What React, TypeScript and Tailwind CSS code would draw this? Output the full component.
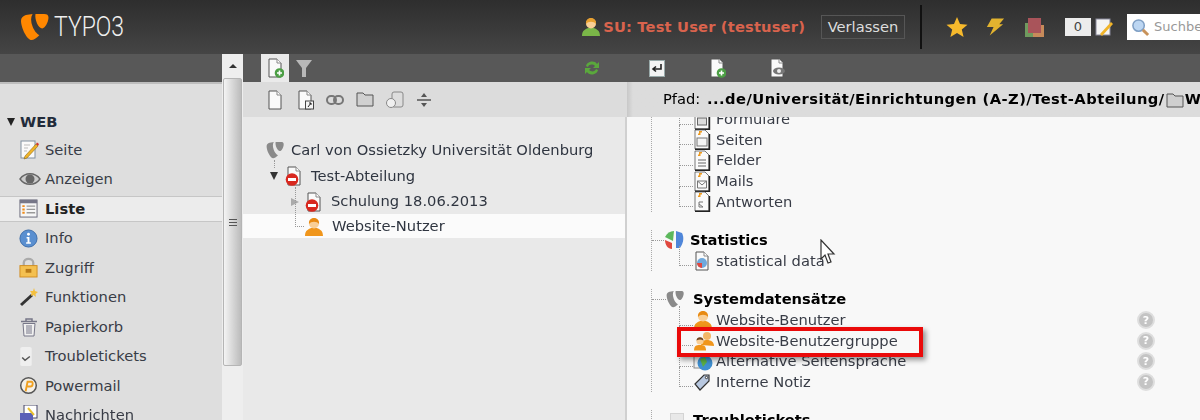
import type { ReactNode } from "react";

const Typo3Mark = ({ color, className }: { color: string; className: string }) => (
  <svg viewBox="0 0 30 28" className={className}>
    <path d="M1 7 C1 4 3 2 6 1 L13 0 C11 3 11 8 13 13 C15 18 17 20 20 22 C17 25 14 27 12 27 C7 27 1 14 1 7 Z" fill={color} />
    <path d="M16 0 L25 0 C28 0 29.5 1 29.5 4 C29.5 8 26 15 23 15 C19 15 15 6 16 0 Z" fill={color} />
  </svg>
);

const Page = ({ children, fold = "#fff" }: { children?: ReactNode; fold?: string }) => (
  <svg viewBox="0 0 18 20" className="h-5 w-[18px]">
    <path d="M3 1 H11 L15 5 V19 H3 Z" fill="#fafafa" stroke="#555" strokeWidth="1" />
    <path d="M11 1 V5 H15" fill={fold} stroke="#888" strokeWidth="1" />
    {children}
  </svg>
);

const NewBadge = () => (
  <g>
    <circle cx="13.5" cy="15" r="4.8" fill="#4c9f45" />
    <path d="M13.5 12.5 V17.5 M11 15 H16" stroke="#fff" strokeWidth="1.6" />
  </g>
);

const StopBadge = () => (
  <g>
    <circle cx="7" cy="13.5" r="6.3" fill="#d8281f" />
    <rect x="3" y="12" width="8" height="3" fill="#fff" />
  </g>
);

const UserIcon = ({ body = "#f0961c", hair = "#e88a12" }: { body?: string; hair?: string }) => (
  <svg viewBox="0 0 20 20" className="h-5 w-5">
    <path d="M1 19 C1 13 5 12 7 11 H13 C15 12 19 13 19 19 Z" fill={body} />
    <circle cx="10" cy="6.5" r="5" fill="#f9cf96" />
    <path d="M5 7 C4 -1 16 -1 15 7 C13 4 7 4 5 7 Z" fill={hair} />
  </svg>
);

const GroupIcon = () => (
  <svg viewBox="0 0 22 20" className="h-5 w-[22px]">
    <circle cx="14" cy="5" r="4" fill="#f2b768" />
    <path d="M8 14 C8 10 11 9 14 9 C18 9 21 11 21 15 Z" fill="#f0961c" />
    <circle cx="7" cy="10" r="3.6" fill="#f9cf96" />
    <path d="M3.5 9.5 C3.5 5 10.5 5 10.5 9.5 C8 8 6 8 3.5 9.5 Z" fill="#6b4423" />
    <path d="M1 19.5 C1 15 3 14 7 14 C11 14 13 15 13 19.5 Z" fill="#f0961c" />
  </svg>
);

const FileNote = ({ lines }: { lines: "form" | "page" | "field" | "mail" | "answer" }) => (
  <svg viewBox="0 0 18 21" className="h-[21px] w-[18px]">
    <path d="M2 1 H12 L16 5 V20 H2 Z" fill="#fafafa" stroke="#555" strokeWidth="0.8" />
    <path d="M2 20.2 H16.4 V5" fill="none" stroke="#222" strokeWidth="1.6" />
    <path d="M6 2 H9 V3.5 H7.5 V6 H5 V4.5 H6 Z" fill="#ee9a1e" />
    {lines === "form" && <rect x="4.5" y="9" width="9" height="7" fill="#ddd" stroke="#666" />}
    {lines === "page" && <rect x="4" y="9" width="10" height="8" fill="#f5f5f5" stroke="#777" />}
    {lines === "field" && <path d="M5 10 H13 M5 13 H13 M5 16 H13" stroke="#666" strokeWidth="1.2" />}
    {lines === "mail" && <path d="M4.5 10 H13.5 V17 H4.5 Z M4.5 10 L9 14 L13.5 10" fill="none" stroke="#777" />}
    {lines === "answer" && <path d="M10 11 H6 V16 H10 M6 13 L10 16" fill="none" stroke="#777" />}
  </svg>
);

const PieIcon = () => (
  <svg viewBox="0 0 20 20" className="h-5 w-5">
    <path d="M12 1 L18 3 C20 7 20 12 16 18 L12 18 Z" fill="#4f86d9" />
    <path d="M10 1 C6 1 3 3 1 7 L9 11 Z" fill="#5cb85c" />
    <path d="M1 10 L8 13 L8 19 C4 19 1 15 1 10 Z" fill="#e0483f" />
  </svg>
);

const QuestionIcon = () => (
  <span className="flex h-[18px] w-[18px] shrink-0 items-center justify-center rounded-full border-2 border-[#dedede] bg-[#c4c4c4] text-[11px] leading-none font-bold text-white">
    ?
  </span>
);

const Connector = () => (
  <span className="mb-[9px] h-[20px] w-[14px] shrink-0 border-b border-l border-dotted border-[#999]" />
);

function TreeRow({ icon, label, help }: { icon: ReactNode; label: string; help?: boolean }) {
  return (
    <div className="flex h-[20.6px] items-center pr-[45px]">
      <Connector />
      <span className="flex w-[23px] shrink-0 items-center">{icon}</span>
      <span className="flex-1 text-[#383c46]">{label}</span>
      {help && <QuestionIcon />}
    </div>
  );
}

function SectionHead({ icon, label, wide }: { icon: ReactNode; label: string; wide?: boolean }) {
  return (
    <div className="flex h-[20.6px] items-center">
      <span className={wide ? "w-[14px] border-b border-dotted border-[#999]" : "w-[12px] border-b border-dotted border-[#999]"} />
      <span className={wide ? "flex w-[27px] shrink-0 items-center" : "flex w-[26px] shrink-0 items-center"}>{icon}</span>
      <span className="font-bold text-black">{label}</span>
    </div>
  );
}

const menuItems: { label: string; icon: ReactNode; active?: boolean }[] = [
  {
    label: "Seite",
    icon: (
      <svg viewBox="0 0 20 20" className="h-5 w-5">
        <rect x="2" y="1" width="14" height="17" fill="#fafafa" stroke="#8090a0" />
        <path d="M5 5 H11 M5 8 H9 M5 11 H8" stroke="#bbb" />
        <path d="M6 16 L17 4 L19 6 L8 18 L5 19 Z" fill="#f0b429" stroke="#7a5a10" strokeWidth="0.5" />
        <path d="M17 4 L19 6 L20 4 L18 2.5 Z" fill="#d4342c" />
      </svg>
    ),
  },
  {
    label: "Anzeigen",
    icon: (
      <svg viewBox="0 0 22 16" className="h-4 w-[22px]">
        <path d="M1 8 C6 1 16 1 21 8 C16 15 6 15 1 8 Z" fill="#ccc" stroke="#666" strokeWidth="1.4" />
        <circle cx="11" cy="8" r="4.5" fill="#666" />
      </svg>
    ),
  },
  {
    label: "Liste",
    active: true,
    icon: (
      <svg viewBox="0 0 20 20" className="h-[19px] w-[19px]">
        <rect x="1" y="1" width="18" height="18" fill="#f6f6f6" stroke="#667" />
        <rect x="1" y="1" width="18" height="3.5" fill="#778" />
        <path d="M3.5 7.5 H6 M3.5 11 H6 M3.5 14.5 H6" stroke="#f08c1a" strokeWidth="2" />
        <path d="M8 7.5 H17 M8 11 H17 M8 14.5 H17" stroke="#999" strokeWidth="1.4" />
      </svg>
    ),
  },
  {
    label: "Info",
    icon: (
      <svg viewBox="0 0 20 20" className="h-[19px] w-[19px]">
        <circle cx="10" cy="10" r="9" fill="#5a8fd0" stroke="#3a6aa8" />
        <circle cx="10" cy="5.5" r="1.5" fill="#fff" />
        <path d="M8 8.5 H11 V14 H12.5 V15.5 H7.5 V14 H9 V10 H8 Z" fill="#fff" />
      </svg>
    ),
  },
  {
    label: "Zugriff",
    icon: (
      <svg viewBox="0 0 20 22" className="h-[21px] w-[19px]">
        <path d="M5 10 V6 C5 0.5 15 0.5 15 6 V10" fill="none" stroke="#aaa" strokeWidth="2.4" />
        <rect x="1" y="9" width="18" height="12" fill="#f4c050" stroke="#d08c20" />
        <rect x="7" y="12.5" width="6" height="4" fill="#b87a18" />
      </svg>
    ),
  },
  {
    label: "Funktionen",
    icon: (
      <svg viewBox="0 0 20 20" className="h-5 w-5">
        <path d="M1 17 L12 7 L14 9 L3 19 Z" fill="#333" />
        <path d="M15 1 L16 4 L19 5 L16.5 7 L17 10 L14.5 8 L12 9 L12.5 6 L11 4 L14 4 Z" fill="#f4c040" />
      </svg>
    ),
  },
  {
    label: "Papierkorb",
    icon: (
      <svg viewBox="0 0 20 20" className="h-5 w-5">
        <path d="M2 4.5 H18 M7 4 V2 H13 V4" fill="none" stroke="#778" strokeWidth="1.5" />
        <path d="M4 6.5 H16 L15 19 H5 Z M8 8 V17 M10 8 V17 M12 8 V17" fill="#f0f0f0" stroke="#778" />
      </svg>
    ),
  },
  {
    label: "Troubletickets",
    icon: (
      <svg viewBox="0 0 14 22" className="h-[21px] w-[14px]">
        <rect x="1" y="1" width="12" height="20" rx="2" fill="#efefef" />
        <path d="M3 12 L6 15 L11 11" fill="none" stroke="#555" strokeWidth="1.6" />
      </svg>
    ),
  },
  {
    label: "Powermail",
    icon: (
      <svg viewBox="0 0 20 20" className="h-[19px] w-[19px]">
        <circle cx="10" cy="10" r="8.2" fill="#f4f0e8" stroke="#555" strokeWidth="1.6" />
        <path d="M7 16 L9 6 H13 C15 6 15 11 12 11 H9" fill="none" stroke="#f0a020" strokeWidth="2" />
      </svg>
    ),
  },
  {
    label: "Nachrichten",
    icon: (
      <svg viewBox="0 0 20 20" className="h-5 w-5">
        <rect x="5" y="0" width="13" height="13" fill="#fff" stroke="#446" />
        <rect x="1" y="8" width="13" height="12" fill="#5a5fb8" />
        <path d="M9 3 L15 10" stroke="#e8c030" strokeWidth="2" />
      </svg>
    ),
  },
];

function ModuleMenu() {
  return (
    <div className="flex w-[222px] shrink-0 flex-col">
      <div className="h-7 shrink-0 bg-[#585858]" />
      <div className="h-[2px] shrink-0 bg-[#bdbdbd]" />
      <div className="flex-1 bg-[#dedede] pt-[27px]">
        <div className="mb-[2px] flex items-center gap-[5px] pl-[7px] leading-[22px] font-bold text-[#222b3a]">
          <span className="h-0 w-0 border-x-[4.5px] border-t-[8px] border-x-transparent border-t-[#222]" />
          WEB
        </div>
        {menuItems.map((item) => (
          <div
            key={item.label}
            className={
              item.active
                ? "my-[1.5px] flex h-[26.5px] items-center border-y border-[#c6c6c6] bg-[#ececec] pl-[19px] font-bold text-[#222]"
                : "flex h-[29.5px] items-center pl-[19px] text-[#383c46]"
            }
          >
            <span className="flex w-[26px] shrink-0 items-center">{item.icon}</span>
            {item.label}
          </div>
        ))}
      </div>
    </div>
  );
}

function ScrollColumn() {
  return (
    <div className="flex w-[21px] shrink-0 flex-col bg-[#eeeeee]">
      <div className="flex h-6 shrink-0 items-center justify-center">
        <span className="h-0 w-0 border-x-[4px] border-b-[4px] border-x-transparent border-b-[#333]" />
      </div>
      <div className="mx-[1px] flex h-[288px] flex-col items-center justify-center gap-[2px] rounded-[2px] border border-[#b5b5b5] bg-gradient-to-r from-[#f4f4f4] to-[#bcbcbc]">
        <span className="h-px w-2 bg-[#555]" />
        <span className="h-px w-2 bg-[#555]" />
        <span className="h-px w-2 bg-[#555]" />
      </div>
    </div>
  );
}

function TreeColumn() {
  return (
    <div className="flex w-[384px] shrink-0 flex-col">
      <div className="flex h-7 shrink-0 items-end bg-[#585858] pr-[27px] pl-[18px]">
        <div className="flex h-7 w-7 items-center justify-center bg-[#eaeaea]">
          <Page>
            <NewBadge />
          </Page>
        </div>
        <svg viewBox="0 0 18 20" className="mb-[4px] ml-[6px] h-5 w-[18px]">
          <path d="M1 2 H17 L11 10 V19 H7 V10 Z" fill="#b8b8b8" />
        </svg>
        <svg viewBox="0 0 16 18" className="mb-[5px] ml-auto h-[18px] w-4">
          <path d="M2 7 C3 2 11 1 13 5 L15 3 V9 H9 L11 7 C9 5 5 5 4 8 Z" fill="#5aa83c" />
          <path d="M14 11 C13 16 5 17 3 13 L1 15 V9 H7 L5 11 C7 13 11 13 12 10 Z" fill="#5aa83c" />
        </svg>
      </div>
      <div className="flex h-[35px] shrink-0 items-center gap-[12px] bg-[#dcdcdc] pl-[23px]">
        <Page />
        <Page>
          <rect x="9.5" y="11" width="8" height="8" fill="#f4f4f4" stroke="#444" />
          <path d="M12 17 L15 13 M13 13 H15 V15" fill="none" stroke="#222" />
        </Page>
        <svg viewBox="0 0 18 10" className="h-[10px] w-[18px]">
          <rect x="1" y="1" width="9" height="8" rx="4" fill="none" stroke="#777" strokeWidth="2" />
          <rect x="8" y="1" width="9" height="8" rx="4" fill="none" stroke="#777" strokeWidth="2" />
        </svg>
        <svg viewBox="0 0 18 15" className="h-[15px] w-[18px]">
          <path d="M1 14 V1 H7 L9 3 H17 V14 Z" fill="#d0d0d0" stroke="#555" />
        </svg>
        <svg viewBox="0 0 18 18" className="h-[18px] w-[18px]">
          <rect x="6" y="1" width="11" height="15" rx="2" fill="#ddd" stroke="#888" />
          <circle cx="5" cy="12" r="4.5" fill="#f0f0f0" stroke="#888" />
        </svg>
        <svg viewBox="0 0 16 14" className="h-[14px] w-4">
          <path d="M1 7 H15" stroke="#555" strokeWidth="1.5" />
          <path d="M8 0 L11 4 H5 Z M8 14 L11 10 H5 Z" fill="#555" />
        </svg>
      </div>
      <div className="flex-1 border-r-2 border-[#d0d0d0] bg-[#e9e9e9] pt-[20px] text-[#2f3540]">
        <div className="flex h-[26px] items-center pl-[23px]">
          <Typo3Mark color="#8a8a8a" className="mr-[7px] h-[19px] w-[18px]" />
          Carl von Ossietzky Universität Oldenburg
        </div>
        <div className="relative flex h-[26px] items-center pl-[27px]">
          <span className="absolute top-[-3px] left-[31px] h-[8px] border-l border-dotted border-[#999]" />
          <span className="mr-[7px] h-0 w-0 border-x-[4.5px] border-t-[8px] border-x-transparent border-t-[#333]" />
          <Page>
            <StopBadge />
          </Page>
          <span className="ml-[8px]">Test-Abteilung</span>
        </div>
        <div className="flex h-[25px] items-center pl-[48px]">
          <span className="mr-[6px] h-0 w-0 border-y-[4.5px] border-l-[8px] border-y-transparent border-l-[#aaa]" />
          <Page>
            <StopBadge />
          </Page>
          <span className="ml-[8px]">Schulung 18.06.2013</span>
        </div>
        <div className="relative flex h-[24px] items-center bg-[#fbfbfb] pt-[1px] pl-[61px]">
          <span className="absolute top-[-27px] left-[52px] h-[40px] w-[9px] border-b border-l border-dotted border-[#999]" />
          <UserIcon />
          <span className="ml-[8px]">Website-Nutzer</span>
        </div>
      </div>
    </div>
  );
}

function RightColumn() {
  return (
    <div className="flex min-w-0 flex-1 flex-col">
      <div className="flex h-7 shrink-0 items-center bg-[#585858] pl-[22px]">
        <svg viewBox="0 0 16 17" className="h-[17px] w-4">
          <rect x="0.5" y="0.5" width="15" height="16" fill="#f4f4f4" stroke="#9aa" />
          <path d="M12 4 V9 H5 M7 6.5 L4 9 L7 11.5" fill="none" stroke="#222" strokeWidth="1.6" />
        </svg>
        <span className="ml-[43px]">
          <Page>
            <NewBadge />
          </Page>
        </span>
        <span className="ml-[42px]">
          <Page>
            <ellipse cx="11" cy="13" rx="6" ry="3.5" fill="#777" />
            <circle cx="11" cy="13" r="2" fill="#eee" />
          </Page>
        </span>
      </div>
      <div className="flex h-[35px] shrink-0 items-center overflow-hidden bg-gradient-to-r from-[#c8c8c8] to-[#dcdcdc] to-[6px] pl-[36px] whitespace-nowrap text-black">
        Pfad:&nbsp;
        <span className="ml-[2px] font-bold tracking-[0.46px]">...de/Universität/Einrichtungen (A-Z)/Test-Abteilung/</span>
        <svg viewBox="0 0 18 16" className="mx-[1px] h-4 w-[18px] shrink-0">
          <path d="M1 15 V2 H7 L9 4 H17 V15 Z" fill="#cfcfcf" stroke="#555" />
        </svg>
        <span className="font-bold tracking-[0.46px]">Website-Nutzer</span>
      </div>
      <div className="relative flex-1 overflow-hidden bg-[#f8f8f8] pl-[24px]">
        <div className="-mt-2 flex flex-col gap-[18px]">
          <div className="border-l border-dotted border-[#aaa] pl-[27px]">
            <TreeRow icon={<FileNote lines="form" />} label="Formulare" />
            <TreeRow icon={<FileNote lines="page" />} label="Seiten" />
            <TreeRow icon={<FileNote lines="field" />} label="Felder" />
            <TreeRow icon={<FileNote lines="mail" />} label="Mails" />
            <TreeRow icon={<FileNote lines="answer" />} label="Antworten" />
          </div>
          <div className="border-l border-dotted border-[#aaa]">
            <SectionHead icon={<PieIcon />} label="Statistics" />
            <div className="pl-[27px]">
              <TreeRow
                icon={
                  <Page>
                    <circle cx="9" cy="12" r="5" fill="#6fa8dc" />
                    <path d="M9 12 L4 12 A5 5 0 0 0 9 17 Z" fill="#e0483f" />
                  </Page>
                }
                label="statistical data"
              />
            </div>
          </div>
          <div className="border-l border-dotted border-[#aaa]">
            <SectionHead wide icon={<Typo3Mark color="#8a8a8a" className="h-[19px] w-[18px]" />} label="Systemdatensätze" />
            <div className="pl-[27px]">
              <TreeRow icon={<UserIcon />} label="Website-Benutzer" help />
              <TreeRow icon={<GroupIcon />} label="Website-Benutzergruppe" help />
              <TreeRow
                icon={
                  <svg viewBox="0 0 20 20" className="h-5 w-5">
                    <rect x="1" y="3" width="12" height="14" fill="#eee" stroke="#888" />
                    <circle cx="12" cy="12" r="7.5" fill="#3f8fd0" />
                    <path d="M7 8 L12 6 L14 11 L10 16 Z" fill="#5cb044" />
                  </svg>
                }
                label="Alternative Seitensprache"
                help
              />
              <TreeRow
                icon={
                  <svg viewBox="0 0 18 20" className="h-5 w-[18px]">
                    <path d="M2 12 L11 3 L16 3 L16 9 L7 18 Z" fill="#b8c8e0" stroke="#333" strokeWidth="1.2" />
                    <circle cx="13.5" cy="5.5" r="1.2" fill="#fff" stroke="#333" />
                  </svg>
                }
                label="Interne Notiz"
                help
              />
            </div>
          </div>
          <div className="border-l border-dotted border-[#aaa]">
            <SectionHead
              wide
              icon={<span className="ml-[4px] h-[14px] w-[14px] border border-[#d4d4d4] bg-[#e8e8e8]" />}
              label="Troubletickets"
            />
          </div>
        </div>

        {/* screenshot annotation */}
        <div className="absolute top-[210px] left-[50px] h-[30px] w-[246px] border-4 border-[#ea0a0a] shadow-[3px_3px_5px_rgba(0,0,0,0.4)]" />
        {/* mouse pointer */}
        <svg viewBox="0 0 16 26" className="absolute top-[122px] left-[193px] h-[26px] w-4">
          <path d="M1 1 V20 L5 16 L8 24 L11 23 L8 15 L14 15 Z" fill="#fff" stroke="#333" strokeWidth="1.2" />
        </svg>
      </div>
    </div>
  );
}

function TopBar() {
  return (
    <div className="flex h-[54px] shrink-0 items-center bg-gradient-to-b from-[#2e2e2e] to-[#454545]">
      <Typo3Mark color="#ff8700" className="ml-[20px] h-[27px] w-[29px]" />
      <span className="ml-[5px] w-[70px] origin-left scale-x-[0.82] font-['Roboto',sans-serif] text-[28px] font-light text-[#f0f0f0]">
        TYPO3
      </span>
      <div className="ml-auto flex items-center">
        <span className="mb-[1px]">
          <UserIcon body="#7ab648" hair="#e8a030" />
        </span>
        <span className="ml-[2px] font-bold tracking-[0.16px] text-[#d9634d]">SU: Test User (testuser)</span>
        <span className="ml-[16px] flex h-[24px] w-[84px] items-center justify-center border border-[#565656] text-[#dddddd]">
          Verlassen
        </span>
        <span className="mx-[15px] h-[44px] w-[2px] bg-[#111]" />
        <svg viewBox="0 0 22 22" className="ml-[9px] h-[22px] w-[22px]">
          <path d="M11 1 L14 8 L21.5 8.7 L15.8 13.5 L17.6 21 L11 17 L4.4 21 L6.2 13.5 L0.5 8.7 L8 8 Z" fill="#f6b92c" />
        </svg>
        <svg viewBox="0 0 22 20" className="ml-[16px] h-5 w-[21px]">
          <path d="M8 1 H21 L16 7 H20 L6 19 L10 10 H3 Z" fill="#e2b32f" />
        </svg>
        <svg viewBox="0 0 21 21" className="ml-[19px] h-[21px] w-[21px]">
          <rect x="1" y="6" width="12" height="14" fill="#6f9a5e" />
          <rect x="9" y="8" width="11" height="12" fill="#c78a5a" />
          <rect x="4" y="1" width="13" height="15" fill="#a9545a" />
        </svg>
        <span className="ml-[20px] flex h-[18px] w-[26px] items-center justify-center bg-[#ececec] text-[13px] text-[#444]">
          0
        </span>
        <svg viewBox="0 0 20 20" className="ml-[4px] h-5 w-5">
          <rect x="1" y="2" width="14" height="16" fill="#f4f4f4" stroke="#889" />
          <path d="M5 17 L16 5 L18 7 L7 19 Z" fill="#f0b429" />
        </svg>
        <div className="ml-[12px] flex h-[26px] w-[73px] items-center overflow-hidden bg-white pl-[4px] text-[13px] whitespace-nowrap text-[#999]">
          <svg viewBox="0 0 20 20" className="h-[19px] w-[19px] shrink-0">
            <circle cx="8" cy="8" r="6" fill="#bcd6f2" stroke="#7f9fc4" strokeWidth="1.6" />
            <path d="M12.5 12.5 L18 18" stroke="#c8925a" strokeWidth="3" />
          </svg>
          <span className="ml-[4px]">Suchbegriff</span>
        </div>
      </div>
    </div>
  );
}

export default function App() {
  return (
    <div className="flex h-[420px] w-[1200px] flex-col overflow-hidden font-['DejaVu_Sans',sans-serif] text-[14.7px] blur-[0.35px]">
      <TopBar />
      <div className="flex min-h-0 flex-1">
        <ModuleMenu />
        <ScrollColumn />
        <TreeColumn />
        <RightColumn />
      </div>
    </div>
  );
}
